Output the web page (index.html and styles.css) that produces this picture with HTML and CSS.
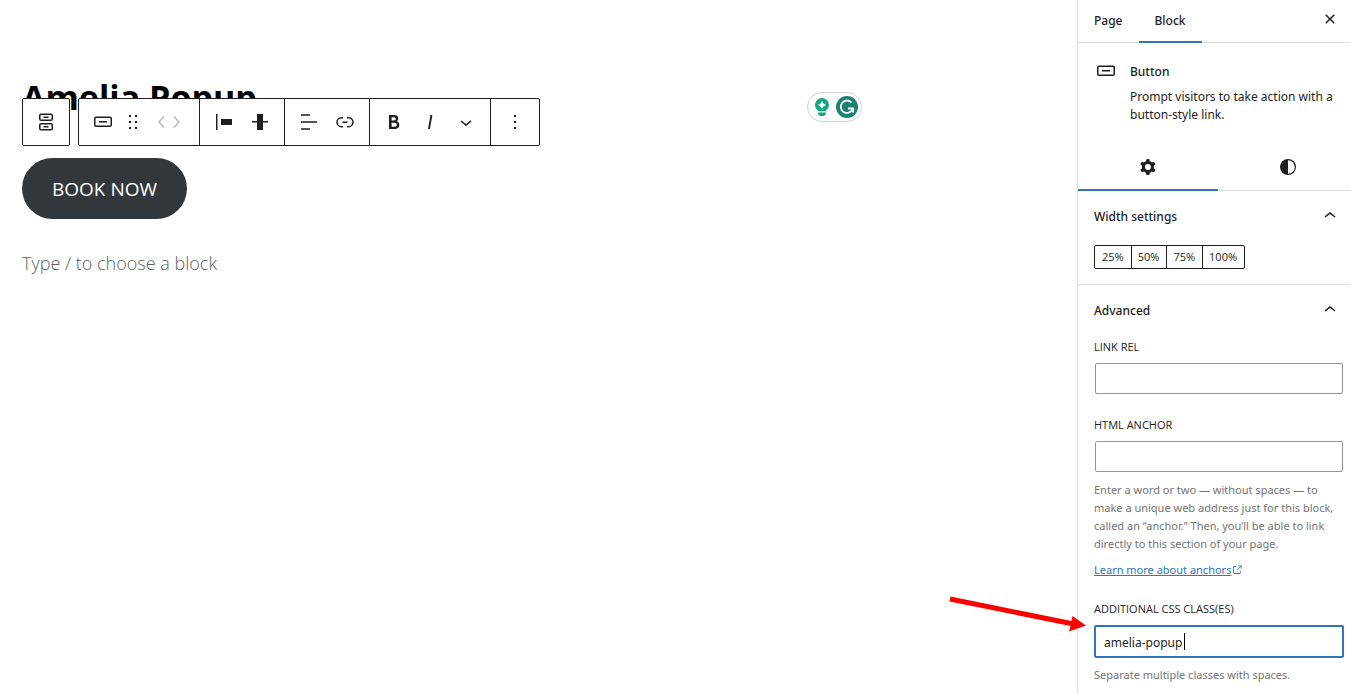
FILE: index.html
```html
<!DOCTYPE html>
<html lang="en">
<head>
    <meta charset="UTF-8">
    <meta name="viewport" content="width=device-width, initial-scale=1.0">
    <title>Edit Page</title>
    <link rel="stylesheet" href="styles.css">
</head>
<body>
    <div class="layout">
        <main class="editor">
            <h1 class="page-title">Amelia Popup</h1>

            <div class="toolbar">
                <div class="toolbar-box">
                    <button type="button" class="tool tool-parent" aria-label="Select Buttons">
                        <svg viewBox="0 0 24 24" width="24" height="24"><path d="M14.5 17.5H9.5V16H14.5V17.5ZM14.5 8H9.5V6.5H14.5V8ZM7 3.5H17A2 2 0 0 1 19 5.500V9A2 2 0 0 1 17 11H7A2 2 0 0 1 5 9V5.500A2 2 0 0 1 7 3.500ZM17 5H7A.5.5 0 0 0 6.500 5.500V9A.5.5 0 0 0 7 9.500H17A.5.5 0 0 0 17.500 9V5.500A.5.5 0 0 0 17 5ZM7 13H17A2 2 0 0 1 19 15V18.500A2 2 0 0 1 17 20.500H7A2 2 0 0 1 5 18.500V15A2 2 0 0 1 7 13ZM17 14.500H7A.5.5 0 0 0 6.500 15V18.500A.5.5 0 0 0 7 19H17A.5.5 0 0 0 17.500 18.500V15A.5.5 0 0 0 17 14.500Z" fill-rule="evenodd"/></svg>
                    </button>
                </div>
                <div class="toolbar-box">
                    <div class="tool-group">
                        <button type="button" class="tool" aria-label="Button">
                            <svg viewBox="0 0 24 24" width="24" height="24"><path d="M8 12.500H16V11H8V12.500ZM19 6.500H5A2 2 0 0 0 3 8.500V15A2 2 0 0 0 5 17H19A2 2 0 0 0 21 15V8.500A2 2 0 0 0 19 6.500ZM5 8H19A.5.5 0 0 1 19.500 8.500V15A.5.5 0 0 1 19 15.500H5A.5.5 0 0 1 4.500 15V8.500A.5.5 0 0 1 5 8Z" fill-rule="evenodd"/></svg>
                        </button>
                        <button type="button" class="tool tool-drag" aria-label="Drag">
                            <svg viewBox="0 0 24 24" width="24" height="24"><path d="M8 5h2v2H8zM14 5h2v2h-2zM8 11h2v2H8zM14 11h2v2h-2zM8 17h2v2H8zM14 17h2v2h-2z"/></svg>
                        </button>
                        <div class="movers">
                            <button type="button" class="tool tool-mover" aria-label="Move left" disabled>
                                <svg viewBox="0 0 24 24" width="24" height="24"><path d="M14.600 7l-1.200-1L8 12l5.400 6 1.200-1-4.600-5z"/></svg>
                            </button>
                            <button type="button" class="tool tool-mover" aria-label="Move right" disabled>
                                <svg viewBox="0 0 24 24" width="24" height="24"><path d="M10.600 6L9.400 7l4.600 5-4.600 5 1.200 1 5.400-6z"/></svg>
                            </button>
                        </div>
                    </div>
                    <div class="tool-group">
                        <button type="button" class="tool" aria-label="Justify items left">
                            <svg viewBox="0 0 24 24" width="24" height="24"><path d="M9 9v6h11V9H9zM4 20h1.500V4H4v16z"/></svg>
                        </button>
                        <button type="button" class="tool" aria-label="Vertical align middle">
                            <svg viewBox="0 0 24 24" width="24" height="24"><path d="M20 11h-5V4H9v7H4v1.500h5V20h6v-7.500h5z"/></svg>
                        </button>
                    </div>
                    <div class="tool-group">
                        <button type="button" class="tool" aria-label="Align text">
                            <svg viewBox="0 0 24 24" width="24" height="24"><path d="M4 19.800h8.900v-1.500H4v1.500zm8.900-15.600H4v1.500h8.900V4.200zm-8.900 7v1.500h16v-1.500H4z"/></svg>
                        </button>
                        <button type="button" class="tool" aria-label="Link">
                            <svg viewBox="0 0 24 24" width="24" height="24"><path d="M10 17.389H8.444A5.194 5.194 0 1 1 8.444 7H10v1.500H8.444a3.694 3.694 0 0 0 0 7.389H10v1.500ZM14 7h1.556a5.194 5.194 0 0 1 0 10.390H14v-1.500h1.556a3.694 3.694 0 0 0 0-7.390H14V7Zm-4.500 6h5v-1.500h-5V13Z"/></svg>
                        </button>
                    </div>
                    <div class="tool-group">
                        <button type="button" class="tool" aria-label="Bold">
                            <svg viewBox="0 0 24 24" width="24" height="24"><path d="M14.700 11.300c1-.6 1.500-1.600 1.500-3 0-2.300-1.300-3.400-4-3.400H7v14h5.800c1.400 0 2.500-.3 3.300-1 .8-.7 1.200-1.700 1.200-2.900.1-1.900-.8-3.100-2.600-3.700zm-5.100-4h2.300c.6 0 1.100.1 1.400.4.3.3.5.7.5 1.200s-.2 1-.5 1.200c-.3.3-.8.4-1.400.4H9.600V7.300zm4.600 9c-.4.3-1 .4-1.700.4H9.600v-3.900h2.900c.7 0 1.300.2 1.700.5.4.3.600.8.600 1.500s-.2 1.200-.6 1.500z"/></svg>
                        </button>
                        <button type="button" class="tool" aria-label="Italic">
                            <svg viewBox="0 0 24 24" width="24" height="24"><path d="M12.500 5L10 19h1.900l2.500-14z"/></svg>
                        </button>
                        <button type="button" class="tool" aria-label="More">
                            <svg viewBox="0 0 24 24" width="24" height="24"><path d="M17.500 11.600L12 16l-5.500-4.400.9-1.200L12 14l4.500-3.600 1 1.200z"/></svg>
                        </button>
                    </div>
                    <div class="tool-group tool-group-options">
                        <button type="button" class="tool" aria-label="Options">
                            <svg viewBox="0 0 24 24" width="24" height="24"><path d="M13 19h-2v-2h2v2zm0-6h-2v-2h2v2zm0-6h-2V5h2v2z"/></svg>
                        </button>
                    </div>
                </div>
            </div>

            <div class="writing-helper">
                <svg viewBox="0 0 16 20" width="16" height="20">
                    <path d="M8 1a7 7 0 0 0-7 7c0 3 2 4.500 3.500 6.300h7c1.500-1.800 3.500-3.300 3.500-6.300a7 7 0 0 0-7-7zM4 15.500h8c0 2-1 3.500-3 3.500H7c-2 0-3-1.500-3-3.500z" fill="#15a683"/>
                    <path d="M8 4L9.400 6.600 12 8 9.400 9.400 8 12 6.600 9.400 4 8 6.600 6.600z" fill="#fff"/>
                </svg>
                <svg viewBox="0 0 22 22" width="22" height="22">
                    <circle cx="11" cy="11" r="11" fill="#1c8273"/>
                    <path d="M15.500 6.500A6.200 6.200 0 1 0 16.500 13.500M12 12.500H17V16.500" fill="none" stroke="#fff" stroke-width="1.800"/>
                </svg>
            </div>

            <button type="button" class="book-button">BOOK NOW</button>
            <p class="block-placeholder">Type / to choose a block</p>
        </main>

        <aside class="sidebar">
            <div class="sidebar-header">
                <button type="button" class="tab">Page</button>
                <button type="button" class="tab tab-active">Block</button>
                <button type="button" class="close" aria-label="Close settings">
                    <svg viewBox="0 0 24 24" width="24" height="24"><path d="M12 13.060l3.712 3.713 1.061-1.060L13.061 12l3.712-3.712-1.060-1.060L12 10.938 8.288 7.227l-1.061 1.060L10.939 12l-3.712 3.712 1.060 1.061L12 13.061z"/></svg>
                </button>
            </div>

            <div class="block-card">
                <svg viewBox="0 0 24 24" width="24" height="24"><path d="M8 12.500H16V11H8V12.500ZM19 6.500H5A2 2 0 0 0 3 8.500V15A2 2 0 0 0 5 17H19A2 2 0 0 0 21 15V8.500A2 2 0 0 0 19 6.500ZM5 8H19A.5.5 0 0 1 19.500 8.500V15A.5.5 0 0 1 19 15.500H5A.5.5 0 0 1 4.500 15V8.500A.5.5 0 0 1 5 8Z" fill-rule="evenodd"/></svg>
                <div>
                    <h2>Button</h2>
                    <p>Prompt visitors to take action with a button-style link.</p>
                </div>
            </div>

            <div class="icon-tabs">
                <button type="button" class="icon-tab icon-tab-active" aria-label="Settings">
                    <svg viewBox="0 0 24 24" width="24" height="24"><path fill-rule="evenodd" d="M10.289 4.836A1 1 0 0 1 11.275 4h1.306a1 1 0 0 1 .987.836l.244 1.466c.787.260 1.503.679 2.108 1.218l1.393-.522a1 1 0 0 1 1.216.437l.653 1.130a1 1 0 0 1-.230 1.273l-1.148.944a6.025 6.025 0 0 1 0 2.435l1.149.946a1 1 0 0 1 .230 1.272l-.653 1.130a1 1 0 0 1-1.216.437l-1.394-.522c-.605.540-1.320.958-2.108 1.218l-.244 1.466a1 1 0 0 1-.987.836h-1.306a1 1 0 0 1-.986-.836l-.244-1.466a5.995 5.995 0 0 1-2.108-1.218l-1.394.522a1 1 0 0 1-1.217-.436l-.653-1.131a1 1 0 0 1 .230-1.272l1.149-.946a6.026 6.026 0 0 1 0-2.435l-1.148-.944a1 1 0 0 1-.230-1.272l.653-1.131a1 1 0 0 1 1.217-.437l1.393.522a5.994 5.994 0 0 1 2.108-1.218l.244-1.466ZM14.929 12a3 3 0 1 1-6 0 3 3 0 0 1 6 0Z"/></svg>
                </button>
                <button type="button" class="icon-tab" aria-label="Styles">
                    <svg viewBox="0 0 24 24" width="24" height="24"><path fill-rule="evenodd" d="M12 4a8 8 0 1 0 0 16 8 8 0 0 0 0-16zm0 1.200a6.800 6.800 0 0 1 0 13.600z"/></svg>
                </button>
            </div>

            <section class="panel panel-width">
                <button type="button" class="panel-title">
                    Width settings
                    <svg viewBox="0 0 24 24" width="24" height="24"><path d="M6.500 12.400L12 8l5.500 4.400-.9 1.200L12 10l-4.500 3.600-1-1.200z"/></svg>
                </button>
                <div class="width-options">
                    <button type="button">25%</button>
                    <button type="button">50%</button>
                    <button type="button">75%</button>
                    <button type="button">100%</button>
                </div>
            </section>

            <section class="panel">
                <button type="button" class="panel-title">
                    Advanced
                    <svg viewBox="0 0 24 24" width="24" height="24"><path d="M6.500 12.400L12 8l5.500 4.400-.9 1.200L12 10l-4.500 3.600-1-1.200z"/></svg>
                </button>

                <div class="field">
                    <label for="linkRel">LINK REL</label>
                    <input type="text" id="linkRel" name="linkRel">
                </div>

                <div class="field">
                    <label for="htmlAnchor">HTML ANCHOR</label>
                    <input type="text" id="htmlAnchor" name="htmlAnchor">
                    <p class="help">Enter a word or two — without spaces — to make a unique web address just for this block, called an “anchor.” Then, you’ll be able to link directly to this section of your page.</p>
                    <a class="learn-more" href="#"><span>Learn more about anchors</span><svg viewBox="0 0 24 24" width="12" height="12"><path d="M18.200 17c0 .7-.6 1.200-1.200 1.200H7c-.7 0-1.200-.6-1.200-1.200V7c0-.7.600-1.200 1.200-1.200h3.200V4.200H7C5.500 4.200 4.200 5.500 4.200 7v10c0 1.500 1.200 2.800 2.800 2.800h10c1.500 0 2.800-1.200 2.800-2.800v-3.600h-1.500V17zM14.900 3v1.500h3.700l-6.400 6.400 1.100 1.100 6.400-6.400v3.700h1.500V3h-6.300z"/></svg></a>
                </div>

                <div class="field field-focused">
                    <label for="cssClasses">ADDITIONAL CSS CLASS(ES)</label>
                    <div class="input-wrap">
                        <input type="text" id="cssClasses" name="cssClasses" value="amelia-popup">
                        <span class="caret"></span>
                    </div>
                    <p class="help">Separate multiple classes with spaces.</p>
                </div>
            </section>
        </aside>

        <svg class="arrow" viewBox="0 0 140 40" width="140" height="40">
            <path d="M3.500 2.500L124.500 27L125.500 22L139 31.500L122 37.500L123.500 32L2.500 7.500z"/>
        </svg>
    </div>
</body>
</html>
```
FILE: styles.css
```css
* {
    box-sizing: border-box;
}

body {
    margin: 0;
    font-family: "Noto Sans", "Open Sans", sans-serif;
    font-size: 12px;
    line-height: 18px;
    color: #1e1e1e;
    background-color: #fff;
}

h1, h2, p {
    margin: 0;
}

button {
    padding: 0;
    border: none;
    background: none;
    color: inherit;
    font: inherit;
    cursor: pointer;
}

svg {
    display: block;
    flex-shrink: 0;
    fill: #1e1e1e;
}

.layout {
    position: relative;
    display: flex;
    min-height: 100vh;
    overflow: hidden;
}

/* Editor */
.editor {
    position: relative;
    flex: 1;
    padding: 72px 22px 0;
    font-family: "Open Sans", "Noto Sans", sans-serif;
}

.page-title {
    font-size: 34px;
    line-height: 50px;
    font-weight: 700;
    color: #000;
}

.toolbar {
    position: absolute;
    top: 98px;
    left: 22px;
    display: flex;
    gap: 8px;
}

.toolbar-box {
    display: flex;
    height: 48px;
    border: 1px solid #1e1e1e;
    border-radius: 2px;
    background-color: #fff;
}

.tool-group {
    display: flex;
    padding: 0 6px;
    border-right: 1px solid #1e1e1e;
}

.tool-group:last-child {
    border-right: none;
}

.tool {
    display: flex;
    align-items: center;
    justify-content: center;
    width: 36px;
}

.tool-parent {
    width: 46px;
}

.tool-drag {
    width: 24px;
}

.movers {
    display: flex;
    padding: 0 10px;
}

.tool-mover {
    width: 14px;
}

.tool-mover svg {
    fill: #bbb;
}

.writing-helper {
    position: absolute;
    top: 92px;
    right: 215px;
    display: flex;
    align-items: center;
    gap: 6px;
    height: 30px;
    padding: 0 3px 0 6px;
    border: 1px solid #d0d0e0;
    border-radius: 15px;
}

.book-button {
    display: block;
    margin-top: 36px;
    padding: 17px 30px 15px;
    border-radius: 31px;
    background-color: #32373c;
    color: #fff;
    font-size: 19px;
    line-height: 29px;
}

.block-placeholder {
    margin-top: 30px;
    font-size: 18px;
    line-height: 29px;
    font-weight: 300;
    color: #606060;
}

/* Sidebar */
.sidebar {
    flex: 0 0 274px;
    border-left: 1px solid #ddd;
    overflow: hidden;
}

.sidebar-header {
    display: flex;
    height: 43px;
    border-bottom: 1px solid #ddd;
}

.tab {
    height: 43px;
    padding: 0 16px 2px;
    font-weight: 500;
}

.tab-active {
    border-bottom: 2px solid #3076bc;
    padding-bottom: 0;
}

.close {
    height: 38px;
    margin-left: auto;
    padding-right: 9px;
}

.block-card {
    display: flex;
    gap: 12px;
    padding: 16px 4px 0 16px;
}

.block-card h2 {
    font-size: 12px;
    line-height: 26px;
    font-weight: 500;
}

.block-card p {
    margin-top: 3px;
}

.icon-tabs {
    display: grid;
    grid-template-columns: 140px 140px;
    width: 280px;
    height: 48px;
    margin-top: 19px;
    border-bottom: 1px solid #ddd;
}

.icon-tab {
    display: flex;
    align-items: center;
    justify-content: center;
    height: 48px;
}

.icon-tab-active {
    padding-top: 2px;
    border-bottom: 2px solid #3076bc;
}

.panel {
    padding: 0 7px 0 16px;
}

.panel-width {
    padding-bottom: 15px;
    border-bottom: 1px solid #ddd;
}

.panel-title {
    display: flex;
    align-items: center;
    justify-content: space-between;
    width: 100%;
    height: 49px;
    padding: 2px 2px 0 0;
    font-weight: 500;
}

.panel-title svg {
    margin-bottom: 2px;
}

.width-options {
    display: inline-flex;
    margin-top: 5px;
    border: 1px solid #1e1e1e;
    border-radius: 2px;
    vertical-align: top;
}

.width-options button {
    height: 22px;
    padding: 0 7px;
    font-family: "Open Sans", "Noto Sans", sans-serif;
    font-size: 11px;
}

.width-options button + button {
    padding: 0 7px 0 6px;
    border-left: 1px solid #1e1e1e;
}

.field {
    margin-bottom: 22px;
}

.field label {
    display: block;
    margin: 4px 0 7px;
    font-family: "Open Sans", "Noto Sans", sans-serif;
    font-size: 11px;
    font-weight: 500;
}

.field input {
    display: block;
    width: calc(100% - 2px);
    height: 31px;
    margin: 0 1px;
    padding: 0 8px;
    border: 1px solid #949494;
    border-radius: 2px;
    font: inherit;
    color: inherit;
}

.field .help {
    margin-top: 9px;
    color: #757575;
    font-size: 11px;
}

.field-focused input {
    width: 100%;
    height: 33px;
    margin: 0;
    padding-top: 1px;
    border: 2px solid #3076bc;
    outline: none;
}

.field-focused .help {
    margin-top: 8px;
}

.input-wrap {
    position: relative;
}

.caret {
    position: absolute;
    top: 8px;
    left: 90px;
    width: 1px;
    height: 17px;
    background-color: #000;
}

.learn-more {
    display: flex;
    align-items: center;
    margin-top: 8px;
    line-height: 17px;
    color: #3076bc;
    font-size: 11px;
    text-decoration: none;
}

.learn-more span {
    text-decoration: underline;
}

.learn-more svg {
    fill: #3076bc;
}

.arrow {
    position: absolute;
    top: 594px;
    right: 264px;
    fill: #f00;
}
```
